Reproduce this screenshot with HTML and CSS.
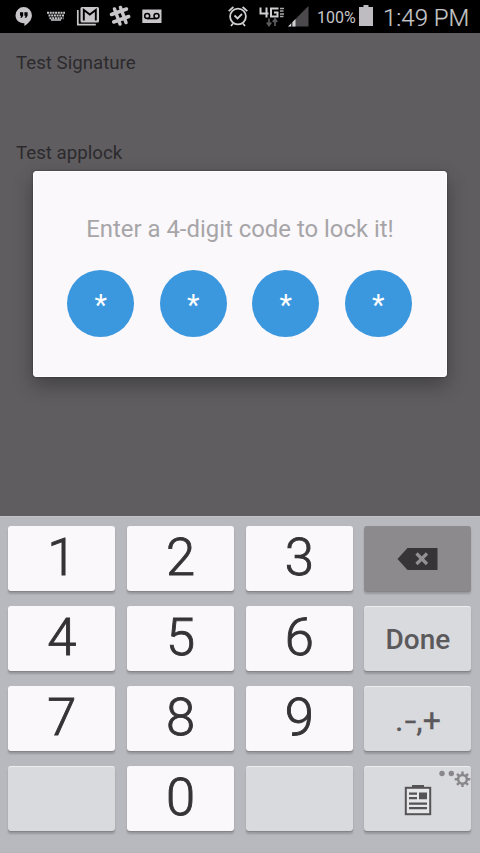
FILE: index.html
```
<!DOCTYPE html>
<html lang="en">
<head>
<meta charset="utf-8">
<title>Applock</title>
<link rel="stylesheet" href="styles.css">
</head>
<body>
<div class="phone">
  <header class="status">
    <svg class="status-icons" width="170" height="33" viewBox="0 0 170 33" fill="#c8c6c9">
      <path d="M23.700 7a8.200 8.200 0 0 1 8.200 8.200c0 4.700-3.700 8.500-7.500 10.800v-2.800C19 23.500 15.500 19.700 15.500 15.200A8.200 8.200 0 0 1 23.700 7z"/>
      <path d="M20 12.300h3.200v3.500l-1.400 2h-1.500l.9-2H20zM24.400 12.300h3.200v3.500l-1.400 2h-1.500l.9-2h-1.200z" fill="#000"/>
      <path d="M47 12.800h18M48.500 15.500h16M49.500 18.200h14" fill="none" stroke="#c8c6c9" stroke-width="1.900" stroke-dasharray="2 .7"/>
      <path d="M51 20h10" stroke="#c8c6c9" stroke-width="1.500"/>
      <path d="M77.800 10v14.700h18" fill="none" stroke="#c8c6c9" stroke-width="1.700"/>
      <rect x="80.500" y="7" width="18.500" height="15.500" rx="1.500"/>
      <path d="M83.800 20.500V10l6 4.500 6-4.500v10.500" fill="none" stroke="#000" stroke-width="1.900"/>
      <path d="M114.500 9l5.500 15M120.500 7.500l5.500 15M111.500 14.500l15-5.500M113.700 22l15-5.500" fill="none" stroke="#c8c6c9" stroke-width="3.500" stroke-linecap="round"/>
      <rect x="142.300" y="9.500" width="19.200" height="13.500"/>
      <path d="M147.200 18.600h9.400" stroke="#000" stroke-width="1.500"/>
      <circle cx="147.200" cy="16" r="2.500" fill="none" stroke="#000" stroke-width="1.500"/>
      <circle cx="156.500" cy="16" r="2.500" fill="none" stroke="#000" stroke-width="1.500"/>
    </svg>
    <svg class="status-signal" width="90" height="33" viewBox="225 0 90 33" fill="none">
      <g stroke="#d0cfd1" stroke-width="1.800">
        <circle cx="238" cy="16.500" r="7.900"/>
        <path d="M228.700 11.200l4.700-4.200M247.300 11.200l-4.700-4.200M233 23.500l-2 2.500M243 23.500l2 2.500M234.500 15.500l3 3 4.500-4.500"/>
        <path d="M260.500 7.500v6h8M266.500 7.500v10M278.500 8.500h-7.500v8h6.500v-4h-3.500" stroke-width="2"/>
      </g>
      <path d="M280 8.500h4M280 11h3.500M280 14h4M280 16.500h3.500" stroke="#aaa" stroke-width="1.300"/>
      <path d="M269 18.500v7M266.800 22.500l2.200 3 2.200-3M275 26v-7M272.800 22l2.200-3 2.200 3" stroke="#5d5b5e" stroke-width="1.700"/>
      <path d="M288 26.500L308.500 6v20.500z" fill="#4b494c"/>
      <path d="M288 26.500l3-3v3zM292.500 26.500V22l3-3v7.500z" fill="#d0cfd1"/>
    </svg>
    <span class="percent">100%</span>
    <svg class="battery" width="15" height="33" viewBox="0 0 15 33"><path d="M0 7h4.500V5h5v2H14v19H0z" fill="#bfbcc1"/></svg>
    <span class="time">1:49 PM</span>
  </header>

  <main class="screen">
    <p class="row">Test Signature</p>
    <p class="row row-second">Test applock</p>
    <section class="dialog">
      <h1 class="prompt">Enter a 4-digit code to lock it!</h1>
      <div class="pins">
        <span class="pin">*</span><span class="pin">*</span><span class="pin">*</span><span class="pin">*</span>
      </div>
    </section>
  </main>

  <div class="keyboard">
    <div class="key">1</div><div class="key">2</div><div class="key">3</div>
    <div class="key dark">
      <svg width="42" height="24" viewBox="0 0 42 24"><path d="M.5 12L10.500 1h30v22h-30z" fill="#363437"/><path d="M19.500 6.500l10.500 10.500M30 6.500l-10.500 10.500" stroke="#929093" stroke-width="3.200"/></svg>
    </div>
    <div class="key">4</div><div class="key">5</div><div class="key">6</div>
    <div class="key soft done">Done</div>
    <div class="key">7</div><div class="key">8</div><div class="key">9</div>
    <div class="key soft symbols">.<span class="minus">-</span>,+</div>
    <div class="key soft"></div><div class="key">0</div><div class="key soft"></div>
    <div class="key soft clipboard">
      <svg class="clip" width="28" height="32" viewBox="0 0 28 32" fill="#555356"><rect x="8" y="0" width="12" height="4"/><rect x="1.800" y="2.800" width="24.400" height="26.400" fill="#e5e6e8" stroke="#555356" stroke-width="2"/><path d="M5 7.500h8v2.300H5zM5 12h8v2.300H5zM15 7.500h8v6.800h-8zM5 17.500h18v2.300H5zM5 22h18v2.300H5z"/></svg>
      <svg class="gear" width="34" height="20" viewBox="0 0 34 20"><g fill="#89878a"><circle cx="5" cy="5.500" r="2.700"/><circle cx="14.300" cy="5.500" r="2.700"/></g><circle cx="25.500" cy="11.300" r="4.400" fill="none" stroke="#89878a" stroke-width="2.500"/><path d="M25.500 3.500v3M25.500 16v3M17.700 11.300h3M30.300 11.300h3M20 5.800l2 2M29 14.800l2 2M31 5.800l-2 2M22 14.800l-2 2" stroke="#89878a" stroke-width="2.400"/></svg>
    </div>
  </div>
</div>
</body>
</html>
```
FILE: styles.css
```
* { box-sizing: border-box; }
body { margin: 0; font-family: Roboto, "Liberation Sans", sans-serif; }
.phone { width: 480px; height: 853px; display: flex; flex-direction: column; overflow: hidden; }
.status { height: 33px; background: #000; display: flex; align-items: center; color: #c8c6c9; flex: none; white-space: nowrap; }
.status svg { flex: none; }
.status-signal { margin-left: 55px; }
.percent { font-size: 16px; width: 42px; margin-left: 2px; padding-top: 2px; }
.battery { margin-left: 0; }
.time { font-size: 24px; font-weight: 300; margin-left: 9px; padding-top: 2px; -webkit-text-stroke: .2px #c8c6c9; }
.screen { height: 483px; background: #5f5d60; padding-top: 18px; flex: none; }
.row { margin: 0 0 0 16px; font-size: 18.700px; line-height: 25px; color: #2c2a2d; }
.row-second { margin-top: 65px; }
.dialog { width: 414px; height: 206px; margin: 5px 0 0 33px; padding-top: 42px; background: #faf8fb; border: 1px solid #fff; border-radius: 3px; box-shadow: 0 8px 20px rgba(0, 0, 0, .32), 0 0 2px rgba(0, 0, 0, .5); }
.prompt { margin: 0; text-align: center; font-size: 23.900px; font-weight: 400; line-height: 30px; color: #a7a5a8; }
.pins { display: flex; gap: 25.500px; margin: 26px 0 0 33.200px; }
.pin { width: 67px; height: 67px; border-radius: 50%; background: #3b97de; color: #fff; font-size: 29px; line-height: 70px; text-align: center; }
.keyboard { flex: 1; background: #b8b9be; border-top: 1px solid #c2c3c7; padding: 9px 8.400px 0; display: grid; grid-template-columns: repeat(4, 107px); grid-auto-rows: 65px; gap: 15px 11.700px; align-content: start; }
.key { display: flex; align-items: center; justify-content: center; border-radius: 3px; background: #faf8fb; color: #353336; font-size: 52.500px; font-weight: 300; line-height: 62px; padding-bottom: 3px; -webkit-text-stroke: .9px #353336; box-shadow: 0 1px 0 #858588, 0 3px 2px rgba(70, 70, 75, .28); }
.dark { background: #8c8a8d; padding-bottom: 0; }
.soft { background: #d9dade; border-top: 1px solid #edeef0; color: #5b595c; -webkit-text-stroke: 0; }
.done { font-size: 28px; font-weight: 500; padding: 2px 0 0; }
.symbols { font-size: 32px; font-weight: 400; padding: 1px 0 0; -webkit-text-stroke: .3px #5b595c; }
.minus { display: inline-block; transform: scaleX(1.3); margin: 0 2px; }
.clipboard { position: relative; padding: 3px 0 0; }
.gear { position: absolute; top: 1px; right: 0; }
```
